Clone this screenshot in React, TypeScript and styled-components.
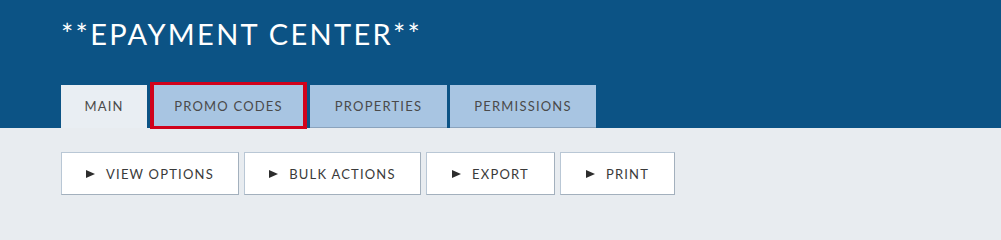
import React from "react";
import styled, { createGlobalStyle } from "styled-components";

const GlobalStyle = createGlobalStyle`
  html, body {
    margin: 0;
    padding: 0;
    background: #e8ecf0;
    font-family: Lato, "Liberation Sans", Arial, sans-serif;
  }
`;

const Header = styled.header`
  background: #0c5385;
  padding: 19px 0 0 61px;
  height: 128px;
  box-sizing: border-box;
  display: flex;
  flex-direction: column;
  justify-content: space-between;
`;

const Title = styled.h1`
  margin: 0;
  color: #fff;
  font-size: 29px;
  line-height: 1;
  font-weight: 400;
  letter-spacing: 2.3px;
`;

const Tabs = styled.nav`
  display: flex;
  gap: 3px;
  align-items: flex-end;
`;

const Tab = styled.div<{ $active?: boolean; $width: number; $flagged?: boolean }>`
  position: relative;
  width: ${(p) => p.$width}px;
  height: 43px;
  box-sizing: border-box;
  display: flex;
  align-items: center;
  justify-content: center;
  background: ${(p) => (p.$active ? "#e9eef3" : "#a8c5e2")};
  border-bottom: 1px solid ${(p) => (p.$active ? "#e9eef3" : "#8aa3bd")};
  color: #4a4a4a;
  font-size: 13px;
  letter-spacing: 1.2px;
  text-transform: uppercase;

  ${(p) =>
    p.$flagged &&
    `
    &::after {
      content: "";
      position: absolute;
      top: -3px;
      left: 0;
      right: 0;
      bottom: -2px;
      border: 4px solid #d0021b;
      border-top-width: 3px;
      border-bottom-width: 3px;
    }
  `}
`;

const Toolbar = styled.div`
  display: flex;
  gap: 5px;
  padding: 24px 0 0 61px;
`;

const ActionButton = styled.button<{ $width: number }>`
  width: ${(p) => p.$width}px;
  height: 43px;
  box-sizing: border-box;
  display: flex;
  align-items: center;
  justify-content: center;
  gap: 11px;
  background: #fff;
  border: 1px solid #b9c7d5;
  border-right-color: #a3b0bd;
  border-bottom-color: #a3b0bd;
  color: #3a3a3a;
  font-family: inherit;
  font-size: 13px;
  letter-spacing: 1.2px;
  text-transform: uppercase;
  padding: 0;
`;

const Arrow = styled.span`
  width: 0;
  height: 0;
  border-top: 4px solid transparent;
  border-bottom: 4px solid transparent;
  border-left: 9px solid #2d2d2d;
`;

const tabs = [
  { label: "Main", width: 86, active: true },
  { label: "Promo Codes", width: 157, flagged: true },
  { label: "Properties", width: 137 },
  { label: "Permissions", width: 146 },
];

const actions = [
  { label: "View Options", width: 178 },
  { label: "Bulk Actions", width: 177 },
  { label: "Export", width: 129 },
  { label: "Print", width: 115 },
];

export default function App() {
  return (
    <>
      <GlobalStyle />
      <Header>
        <Title>**EPAYMENT CENTER**</Title>
        <Tabs>
          {tabs.map((t) => (
            <Tab key={t.label} $width={t.width} $active={t.active} $flagged={t.flagged}>
              {t.label}
            </Tab>
          ))}
        </Tabs>
      </Header>
      <Toolbar>
        {actions.map((a) => (
          <ActionButton key={a.label} $width={a.width}>
            <Arrow />
            {a.label}
          </ActionButton>
        ))}
      </Toolbar>
    </>
  );
}
